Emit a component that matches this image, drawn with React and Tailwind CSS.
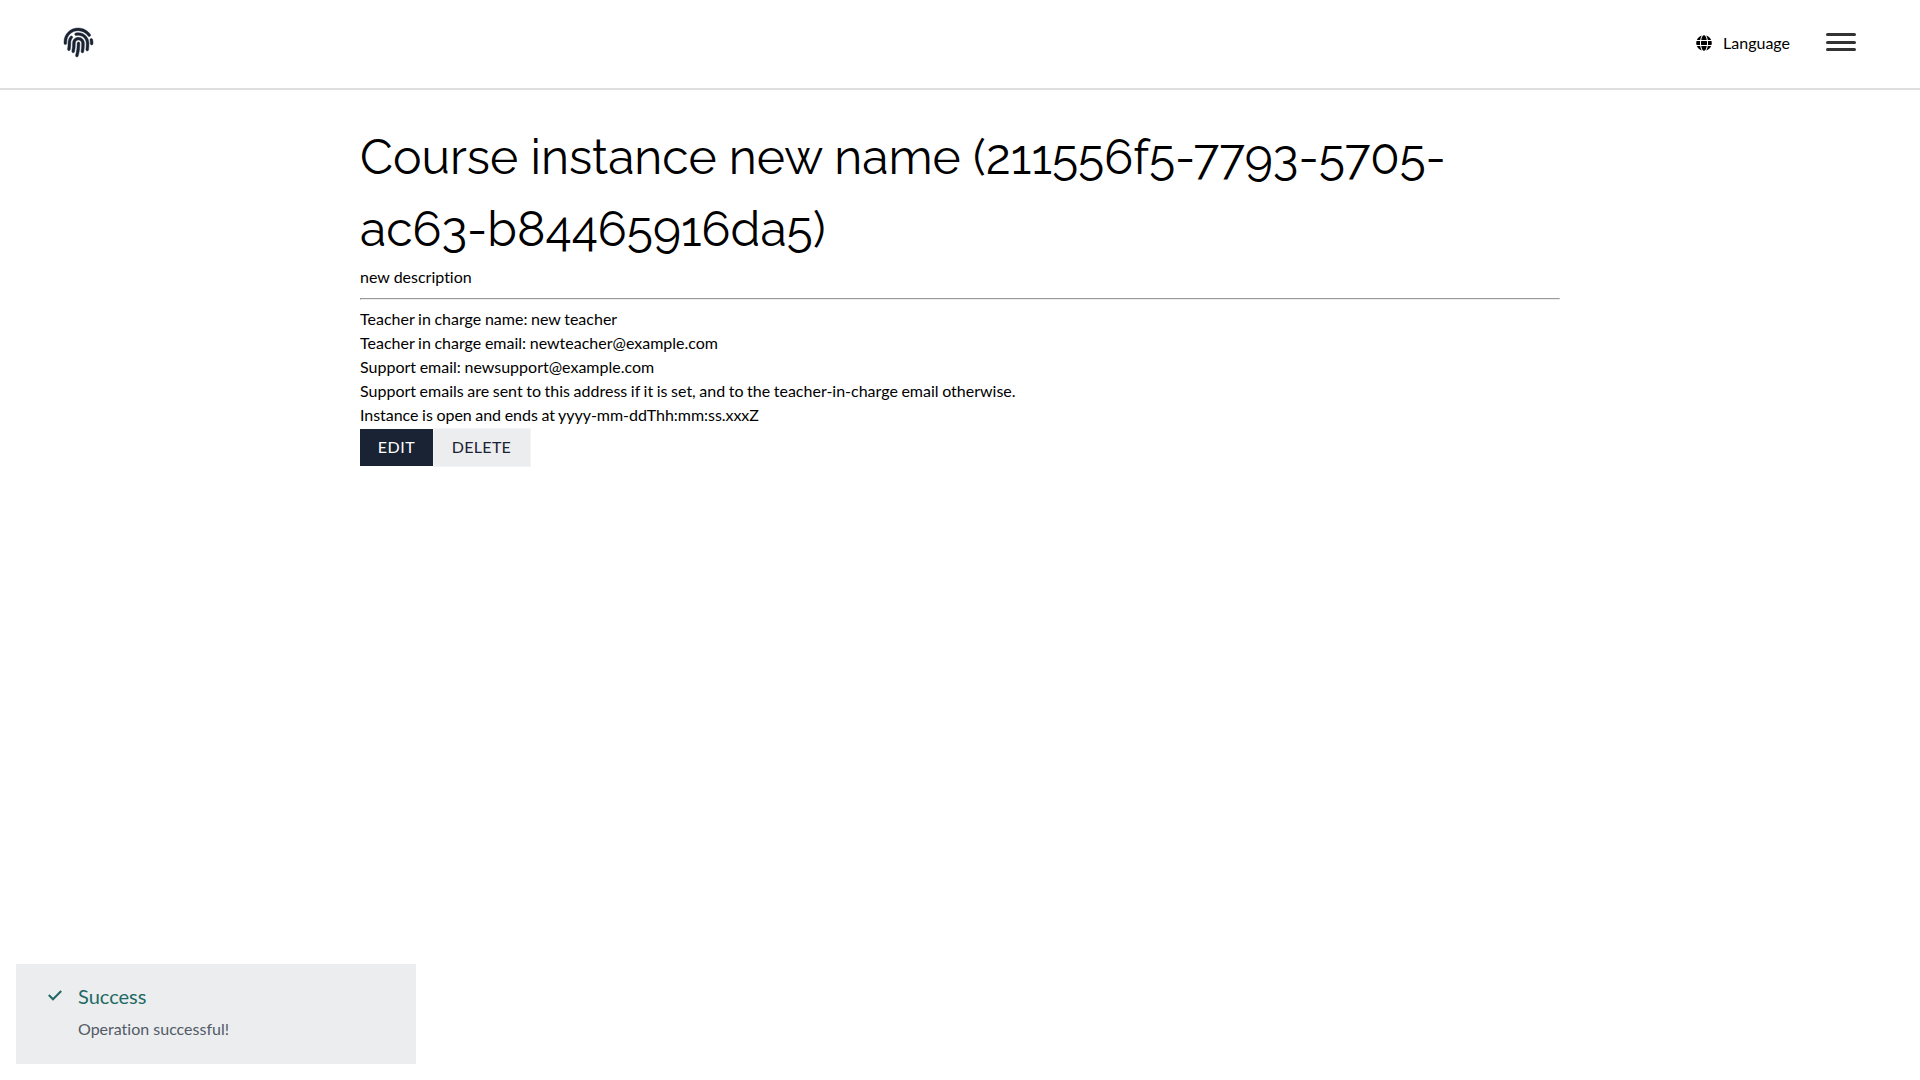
import { FaGlobe, FaFingerprint } from "react-icons/fa";

export default function App() {
  return (
    <div className="relative flex h-[1080px] w-[1920px] flex-col overflow-hidden bg-white font-['Lato',sans-serif] text-[16px] leading-6 text-black [font-variant-ligatures:none]">
      <header className="flex h-[90px] shrink-0 items-start justify-between border-b-2 border-[#dedede] px-16">
        <FaFingerprint className="mt-[28px] h-[29px] w-[29px] overflow-visible stroke-[#1a2333] stroke-[8] text-[#1a2333]" />
        <div className="flex items-start pt-[31px]">
          <FaGlobe className="mr-[11px] mt-1 h-4 w-4" />
          <span>Language</span>
          <div className="ml-9 mt-[2px] flex w-[30px] flex-col">
            <span className="mb-[5px] h-[3px] rounded-sm bg-[#333]" />
            <span className="mb-1 h-[3px] rounded-sm bg-[#333]" />
            <span className="h-[3px] rounded-sm bg-[#333]" />
          </div>
        </div>
      </header>
      <main className="mx-auto mt-[31px] w-[1200px]">
        <h1 className="font-['Raleway',sans-serif] text-[48px] leading-[72px]">
          Course instance new name (211556f5-7793-5705-<br />ac63-b84465916da5)
        </h1>
        <p>new description</p>
        <hr className="mb-[7px] mt-[9px] h-[2px] border border-t-[#999] border-r-[#eee] border-b-[#eee] border-l-[#999]" />
        <div className="[word-spacing:-0.45px]">
          <p>Teacher in charge name: new teacher</p>
          <p>Teacher in charge email: newteacher@example.com</p>
          <p>Support email: newsupport@example.com</p>
          <p className="[word-spacing:-0.52px]">
            Support emails are sent to this address if it is set, and to the teacher-in-charge email otherwise.
          </p>
          <p className="tracking-[-0.035px]">Instance is open and ends at yyyy-mm-ddThh:mm:ss.xxxZ</p>
        </div>
        <div className="mt-px flex items-start">
          <button className="mt-px h-[37px] w-[73px] bg-[#1a2333] pb-px text-[16px] leading-none tracking-[0.5px] text-white">EDIT</button>
          <button className="h-[39px] w-[98px] border border-[#f3f4f5] bg-[#ebedee] pb-px pr-px text-[16px] leading-none tracking-[0.3px] text-[#1a2333]">DELETE</button>
        </div>
      </main>
      <div className="absolute bottom-4 left-4 flex h-[100px] w-[400px] bg-[#ebedee] pl-8 pt-[19px]">
        <svg className="mt-[7px] h-[11px] w-[14px]" viewBox="0 0 14 11" fill="none" stroke="#1f6964" strokeWidth="2">
          <path d="M0.8 5 L5 9.3 L13.2 1" />
        </svg>
        <div className="ml-4">
          <div className="text-[20px] leading-[26px] text-[#1f6964]">Success</div>
          <div className="mt-2 leading-6 text-[#535a66]">Operation successful!</div>
        </div>
      </div>
    </div>
  );
}
